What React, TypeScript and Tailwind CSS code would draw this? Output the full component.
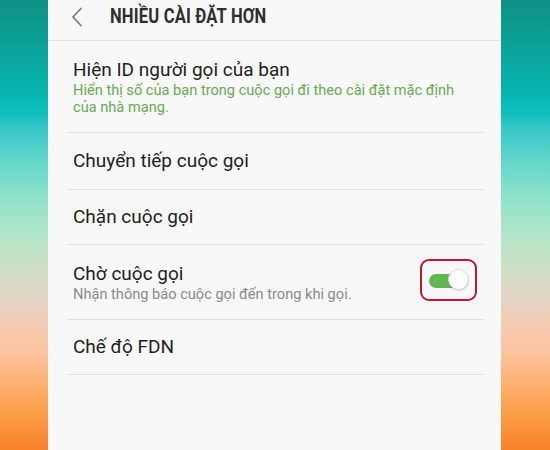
import React from "react";

const font = { fontFamily: "Roboto, 'Noto Sans', sans-serif" };

function Row({
  title,
  sub,
  subColor,
  h,
  right,
}: {
  title: string;
  sub?: string[];
  subColor?: string;
  h: string;
  right?: React.ReactNode;
}) {
  return (
    <div className={`flex items-center justify-between border-b border-[#e2e2e2] ${h}`}>
      <div className="flex flex-col pl-[6px]">
        <div className="text-[19px] leading-[24px] text-[#222222]">{title}</div>
        {sub && (
          <div className={`text-[14.6px] leading-[17px] ${subColor}`}>
            {sub.map((s, i) => (
              <div key={i}>{s}</div>
            ))}
          </div>
        )}
      </div>
      {right}
    </div>
  );
}

export default function App() {
  return (
    <div
      className="w-[550px] h-[450px] flex bg-[linear-gradient(180deg,#0f9184_0%,#07b3ae_20%,#0cc0bd_25%,#3cc8c8_29%,#6ad8cc_37%,#8fe2cc_44%,#b0e6c8_52%,#d0dec4_60%,#e6d4c4_67%,#f6c8b0_73%,#fcc4a0_78%,#fdb47a_84%,#fca04c_91%,#f8822a_100%)]"
      style={font}
    >
      <div className="ml-[48px] w-[453px] h-full bg-[#f8f8f8] flex flex-col">
        <div className="h-[41px] shrink-0 flex items-center border-b border-[#e4e4e4]">
          <svg width="12" height="20" viewBox="0 0 12 20" className="ml-[23px] mt-[-7px]">
            <path d="M10 1.5 L2 10 L10 18.5" fill="none" stroke="#6f8a6b" strokeWidth="1.8" strokeLinecap="round" />
          </svg>
          <div className="ml-[27px] mt-[-7px] text-[19.5px] font-bold text-[#2e2e2e] tracking-[0.2px] origin-left scale-x-[0.85] whitespace-nowrap">
            NHIỀU CÀI ĐẶT HƠN
          </div>
        </div>
        <div className="pl-[19px] pr-[17px] flex flex-col">
          <Row
            h="h-[92px]"
            title="Hiện ID người gọi của bạn"
            sub={["Hiển thị số của bạn trong cuộc gọi đi theo cài đặt mặc định", "của nhà mạng."]}
            subColor="text-[#68ab57]"
          />
          <Row h="h-[57px]" title="Chuyển tiếp cuộc gọi" />
          <Row h="h-[55px]" title="Chặn cuộc gọi" />
          <Row
            h="h-[75px]"
            title="Chờ cuộc gọi"
            sub={["Nhận thông báo cuộc gọi đến trong khi gọi."]}
            subColor="text-[#8a8a8a]"
            right={
              <div className="mr-[7px] mt-[-4px] w-[57px] h-[42px] rounded-[9px] border-2 border-[#c8142c] flex items-center justify-center">
                <div className="relative w-[40px] h-[20px]">
                  <div className="absolute left-[0px] top-[4px] w-[36px] h-[14px] rounded-full bg-[#62b751]" />
                  <div className="absolute right-0 top-[-1px] w-[21px] h-[21px] rounded-full bg-white border border-[#d8d8d8] shadow-[0_1px_1px_rgba(0,0,0,0.15)]" />
                </div>
              </div>
            }
          />
          <Row h="h-[55px]" title="Chế độ FDN" />
        </div>
      </div>
    </div>
  );
}
